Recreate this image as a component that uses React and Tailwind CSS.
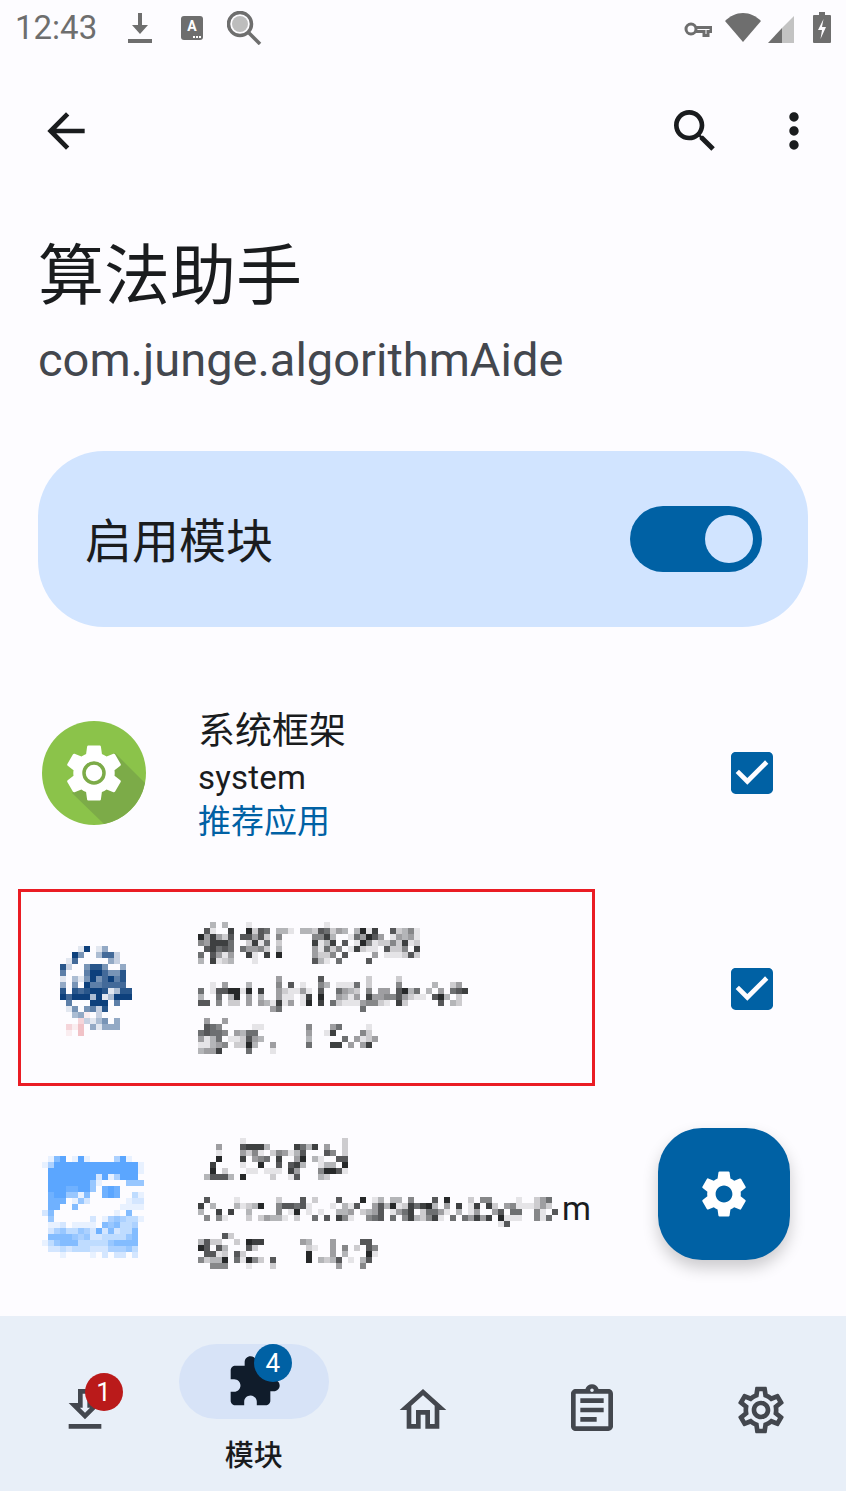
import React from 'react';

const ICONS = {
  back: 'M20 11H7.83l5.59-5.59L12 4l-8 8 8 8 1.41-1.41L7.83 13H20v-2z',
  search: 'M15.5 14h-.79l-.28-.27C15.41 12.59 16 11.11 16 9.5 16 5.91 13.09 3 9.5 3S3 5.91 3 9.5 5.91 16 9.5 16c1.61 0 3.09-.59 4.23-1.57l.27.28v.79l5 4.99L20.49 19l-4.99-5zm-6 0C7.01 14 5 11.99 5 9.5S7.01 5 9.5 5 14 7.01 14 9.5 11.99 14 9.5 14z',
  more: 'M12 8c1.1 0 2-.9 2-2s-.9-2-2-2-2 .9-2 2 .9 2 2 2zm0 2c-1.1 0-2 .9-2 2s.9 2 2 2 2-.9 2-2-.9-2-2-2zm0 6c-1.1 0-2 .9-2 2s.9 2 2 2 2-.9 2-2-.9-2-2-2z',
  gear: 'M19.14 12.94c.04-.3.06-.61.06-.94 0-.32-.02-.64-.07-.94l2.03-1.58c.18-.14.23-.41.12-.61l-1.92-3.32c-.12-.22-.37-.29-.59-.22l-2.39.96c-.5-.38-1.03-.7-1.62-.94l-.36-2.54c-.04-.24-.24-.41-.48-.41h-3.84c-.24 0-.43.17-.47.41l-.36 2.54c-.59.24-1.13.57-1.62.94l-2.39-.96c-.22-.08-.47 0-.59.22L2.74 8.87c-.12.21-.08.47.12.61l2.03 1.58c-.05.3-.09.63-.09.94s.02.64.07.94l-2.03 1.58c-.18.14-.23.41-.12.61l1.92 3.32c.12.22.37.29.59.22l2.39-.96c.5.38 1.03.7 1.62.94l.36 2.54c.05.24.24.41.48.41h3.84c.24 0 .44-.17.47-.41l.36-2.54c.59-.24 1.13-.56 1.62-.94l2.39.96c.22.08.47 0 .59-.22l1.92-3.32c.12-.22.07-.47-.12-.61l-2.01-1.58zM12 15.6c-1.98 0-3.6-1.62-3.6-3.6s1.62-3.6 3.6-3.6 3.6 1.62 3.6 3.6-1.62 3.6-3.6 3.6z',
  gearOutline: 'M19.43 12.98c.04-.32.07-.64.07-.98 0-.34-.03-.66-.07-.98l2.11-1.65c.19-.15.24-.42.12-.64l-2-3.46c-.09-.16-.26-.25-.44-.25-.06 0-.12.01-.17.03l-2.49 1c-.52-.4-1.08-.73-1.69-.98l-.38-2.65C14.46 2.18 14.25 2 14 2h-4c-.25 0-.46.18-.49.42l-.38 2.65c-.61.25-1.17.59-1.69.98l-2.49-1c-.06-.02-.12-.03-.18-.03-.17 0-.34.09-.43.25l-2 3.46c-.13.22-.07.49.12.64l2.11 1.65c-.04.32-.07.65-.07.98 0 .33.03.66.07.98l-2.11 1.65c-.19.15-.24.42-.12.64l2 3.46c.09.16.26.25.44.25.06 0 .12-.01.17-.03l2.49-1c.52.4 1.08.73 1.69.98l.38 2.65c.03.24.24.42.49.42h4c.25 0 .46-.18.49-.42l.38-2.65c.61-.25 1.17-.59 1.69-.98l2.49 1c.06.02.12.03.18.03.17 0 .34-.09.43-.25l2-3.46c.12-.22.07-.49-.12-.64l-2.11-1.65zm-1.98-1.71c.04.31.05.52.05.73 0 .21-.02.43-.05.73l-.14 1.13.89.7 1.08.84-.7 1.21-1.27-.51-1.04-.42-.9.68c-.43.32-.84.56-1.25.73l-1.06.43-.16 1.13-.2 1.35h-1.4l-.19-1.35-.16-1.13-1.06-.43c-.43-.18-.83-.41-1.23-.71l-.91-.7-1.06.43-1.27.51-.7-1.21 1.08-.84.89-.7-.14-1.13c-.03-.31-.05-.54-.05-.74s.02-.43.05-.73l.14-1.13-.89-.7-1.08-.84.7-1.21 1.27.51 1.04.42.9-.68c.43-.32.84-.56 1.25-.73l1.06-.43.16-1.13.2-1.35h1.39l.19 1.35.16 1.13 1.06.43c.43.18.83.41 1.23.71l.91.7 1.06-.43 1.27-.51.7 1.21-1.07.85-.89.7.14 1.13zM12 8c-2.21 0-4 1.79-4 4s1.79 4 4 4 4-1.79 4-4-1.79-4-4-4zm0 6c-1.1 0-2-.9-2-2s.9-2 2-2 2 .9 2 2-.9 2-2 2z',
  home: 'M12 5.69l5 4.5V18h-2v-6H9v6H7v-7.81l5-4.5M12 3L2 12h3v8h6v-6h2v6h6v-8h3L12 3z',
  assignment: 'M7 15h7v2H7zm0-4h10v2H7zm0-4h10v2H7zm12-4h-4.18C14.4 1.84 13.3 1 12 1c-1.3 0-2.4.84-2.82 2H5c-.14 0-.27.01-.4.04-.39.08-.74.28-1.01.55-.18.18-.33.4-.43.64-.1.23-.16.49-.16.77v14c0 .27.06.54.16.78s.25.45.43.64c.27.27.62.47 1.01.55.13.02.26.03.4.03h14c1.1 0 2-.9 2-2V5c0-1.1-.9-2-2-2zm-7-.25c.41 0 .75.34.75.75s-.34.75-.75.75-.75-.34-.75-.75.34-.75.75-.75zM19 19H5V5h14v14z',
  extension: 'M20.5 11H19V7c0-1.1-.9-2-2-2h-4V3.5C13 2.12 11.88 1 10.5 1S8 2.12 8 3.5V5H4c-1.1 0-1.99.9-1.99 2v3.8H3.5c1.49 0 2.7 1.21 2.7 2.7s-1.21 2.7-2.7 2.7H2V20c0 1.1.9 2 2 2h3.8v-1.5c0-1.49 1.21-2.7 2.7-2.7 1.49 0 2.7 1.21 2.7 2.7V22H17c1.1 0 2-.9 2-2v-4h1.5c1.38 0 2.5-1.12 2.5-2.5S21.88 11 20.5 11z',
  download: 'M19 9h-4V3H9v6H5l7 7 7-7zm-8 2V5h2v6h1.17L12 13.17 9.83 11H11zm-6 7h14v2H5z',
  checkBox: 'M19 3H5c-1.11 0-2 .9-2 2v14c0 1.1.89 2 2 2h14c1.11 0 2-.9 2-2V5c0-1.1-.89-2-2-2zm-9 14l-5-5 1.41-1.41L10 14.17l7.59-7.59L19 8l-9 9z',
};

function Icon({ d, className }) {
  return (
    <svg viewBox="0 0 24 24" className={className} fill="currentColor">
      <path d={d} />
    </svg>
  );
}

// pixelated areas of the screenshot, one string per row of 6px blocks: "column:level"
// level 1-9 is how strong the colour is, a-c are the pink blocks
function Mosaic({ rows, cols, color = '26,28,30', className }) {
  return (
    <svg viewBox={`0 0 ${cols * 6} ${rows.length * 6}`} width={cols * 6} height={rows.length * 6} className={className} shapeRendering="crispEdges">
      {rows.map((row, y) =>
        row.split(' ').filter(Boolean).map((cell) => {
          const [x, v] = cell.split(':');
          const pink = { a: 0.2, b: 0.3, c: 0.08 }[v];
          const fill = pink ? `rgba(215,60,70,${pink})` : `rgba(${color},${Number(v) / 9.5})`;
          return <rect key={x} x={x * 6} y={y * 6} width="6" height="6" fill={fill} />;
        })
      )}
    </svg>
  );
}

const TITLE_2 = [
  '2:3 4:3 8:1 21:1',
  '1:7 2:1 5:8 8:9 9:2 10:7 11:6 13:3 14:3 15:1 17:3 18:3 19:2 20:7 21:6 22:2 23:4 24:3 26:3 27:9 28:1 29:8 32:7 33:2 34:3 35:5 36:1',
  '0:9 1:4 2:8 3:4 4:2 5:7 7:7 8:7 9:4 10:7 11:2 13:5 19:5 20:5 21:8 22:3 25:1 26:6 27:4 28:9 29:7 30:4 32:1 33:4 34:3 35:4 36:1',
  '0:5 1:4 2:8 3:8 4:8 5:6 8:2 9:8 10:1 11:6 13:2 19:8 20:1 21:3 22:8 24:7 26:1 27:9 28:5 29:1 30:2 31:2 32:5 33:2 34:8 35:1 36:2',
  '1:7 2:8 3:6 4:7 5:6 7:6 8:4 9:4 10:5 11:2 13:3 19:4 20:1 21:6 22:2 23:5 25:1 26:8 27:2 28:1 29:1 31:7 32:2 33:2 34:5 36:8',
  '0:6 2:7 3:4 4:1 5:4 8:8 9:1 11:8 13:9 19:4 20:2 21:2 22:5 24:7 29:4 31:1 32:1 33:1 34:2 35:7 36:2',
  '0:3 2:8 3:1 4:2 5:3 9:1 19:7 20:3 21:1 23:6 28:7',
];
const SUB_2 = [
  '13:4 20:7 28:2 33:2',
  '2:1 4:4 8:3 13:5 15:7 17:1 20:5 21:3 23:1 24:1 25:1 26:6 28:2 33:5 39:3 42:2 43:4',
  '0:6 2:1 3:7 4:7 5:9 6:9 7:1 8:9 10:8 13:4 14:2 15:1 16:1 17:4 18:1 20:7 23:6 24:4 25:3 26:2 28:5 30:4 31:4 33:7 34:9 35:3 36:6 38:3 40:4 42:6 43:7 44:8',
  '0:3 3:6 5:3 6:9 8:4 10:3 13:4 14:1 15:1 17:1 18:8 20:9 23:4 24:3 25:1 26:4 28:8 29:4 30:4 31:5 32:5 33:7 34:4 35:2 36:1 37:1 39:7 40:9 41:3 43:2',
  '0:7 1:7 3:5 5:2 6:2 8:4 10:4 11:3 12:1 13:8 14:1 15:4 17:1 18:9 20:8 22:6 23:2 24:1 25:1 26:1 27:4 28:5 29:5 30:2 31:1 33:8 34:2 40:7 42:3 43:2',
  '12:4 13:6 27:6',
];
const META_2 = [
  '1:4 4:4',
  '1:7 2:6 3:5 9:1 10:1 18:5 22:4 23:6 28:1',
  '0:6 1:7 2:6 3:6 4:5 6:4 7:3 8:6 9:6 18:4 21:1 22:8 27:5 28:2',
  '0:4 1:1 2:3 3:6 5:1 6:1 7:2 8:7 9:4 10:3 18:3 24:6 26:4 27:1 28:2 29:4',
  '0:1 1:1 2:3 3:4 4:5 6:2 7:2 8:9 9:3 12:4 18:6 22:8 23:8 25:4 27:4 28:8',
  '0:3 1:4 2:4 3:8 8:6 12:1',
];
const ICON_2 = [
  '6:1 7:9 9:1 10:4',
  '5:9 6:5 9:3 10:7 11:7 12:2',
  '4:1 5:7 11:4 12:2',
  '3:8 4:2 7:5 8:8 9:8 10:5 13:4',
  '3:6 7:6 8:9 9:9 10:7 11:5 12:5 13:8',
  '3:1 5:3 6:1 7:5 8:9 9:5 10:7 11:9 12:6 13:8',
  '3:4 5:5 7:9 8:6 9:6 10:7 11:7 12:7 13:7',
  '3:8 5:8 6:7 7:8 8:9 9:9 10:8 11:1 12:3 13:8 14:8',
  '3:9 4:7 5:9 6:9 7:9 8:3 9:9 10:1 11:3 12:9 13:9 14:9',
  '4:6 8:9 9:9 10:9 12:6',
  '4:1 5:5 7:5 8:6 9:2 10:8',
  '5:3 6:4 7:c 9:2',
  '6:a 7:2 8:1 9:3 10:5 12:4',
  '4:a 5:c 6:b 8:4 9:1 10:4 11:4 12:4',
  '4:c 6:b',
];

const TITLE_3 = [
  '7:1 24:2',
  '3:4 7:7 8:8 9:8 10:8 11:3 16:8 17:6 18:3 19:8 21:4 24:2',
  '3:1 7:4 8:2 9:5 10:1 12:2 13:5 14:4 15:1 16:3 17:7 21:7 22:5 24:2',
  '3:9 7:8 9:4 10:5 11:6 13:8 16:4 17:9 19:3 20:1 23:7 24:7',
  '2:8 7:1 10:9 13:7 15:7 16:8 17:3 20:1 21:3 22:3 24:9',
  '2:9 4:2 8:1 9:1 11:1 12:1 13:1 15:8 16:4 20:5 21:9 22:9 23:7 24:1',
  '1:3 2:7 3:7 4:7 5:3 7:9 12:2 15:1 16:7 20:3 21:2',
];
const SUB_3 = [
  '1:7 6:1 13:2 17:7 19:2 23:7 27:9 29:1 30:3 32:3 33:3 35:5 39:7 41:9 45:2 47:5 48:5 53:1 56:2 57:4 58:6',
  '0:8 2:3 6:3 7:1 8:2 9:3 10:9 13:5 14:7 15:7 16:6 17:7 18:1 22:1 24:3 25:1 26:7 29:4 30:7 31:3 32:9 33:1 34:2 35:8 36:6 37:8 38:9 39:3 41:4 43:8 45:1 46:8 48:8 49:2 51:4 52:5 53:1 54:1 55:1 56:2 57:4 58:2',
  '0:3 3:8 5:8 8:3 13:5 15:1 16:9 18:1 20:1 23:3 24:3 25:4 27:2 28:3 29:4 30:7 32:1 33:4 34:6 35:8 37:2 38:6 39:6 40:4 41:1 43:3 45:1 46:4 49:4 50:7 52:6 53:6 56:5 57:1 59:7',
  '1:5 3:5 4:1 8:2 10:2 11:4 12:3 13:3 14:1 16:2 19:6 21:7 23:8 24:5 25:1 28:5 29:6 30:7 32:6 34:5 35:8 36:3 37:2 38:5 39:8 40:1 42:6 44:6 45:4 46:8 47:4 48:8 50:9 51:1 52:1 53:1 56:5 57:1 58:6',
  '50:1 51:7',
];
const META_3 = [
  '4:7 5:2',
  '0:3 1:7 2:2 3:2 6:2 8:9 9:8 10:8 17:4 18:3 22:4 27:7 28:7',
  '0:9 1:7 3:7 4:3 8:7 9:2 18:2 19:1 22:4 24:5 26:2 28:7 29:5',
  '1:7 2:7 3:1 4:2 6:7 7:2 18:9 22:4 24:3 28:9 29:1',
  '0:5 1:2 2:3 3:3 4:9 6:6 7:1 8:9 9:5 10:2 12:7 18:9 20:3 21:2 22:3 23:7 25:1 27:3 28:7',
  '2:5 3:5 4:5 8:1 12:2 23:4 27:5',
];
const ICON_3 = [
  '1:1 2:6 3:8 5:1 6:8 7:1 12:4 13:8 14:1',
  '0:1 1:4 2:8 3:8 4:8 5:8 6:8 7:8 8:8 9:8 10:8 11:8 12:8 13:8 14:8 15:8 16:1',
  '1:8 2:8 3:8 4:8 5:8 6:8 7:8 8:8 9:8 10:8 11:8 12:8 13:8 14:8 15:8 16:1',
  '1:8 2:8 3:8 4:8 5:8 6:8 7:8 8:8 9:2 10:8 11:1 12:4 13:8 14:8 15:8',
  '1:8 2:8 3:8 4:8 5:8 6:8 7:8 8:5 9:1 14:5 15:5 16:5',
  '1:8 2:8 3:8 4:7 5:7 6:8 7:8 8:5 10:7 11:8 12:7',
  '1:7 2:8 3:8 4:5 5:5 6:1 7:6 10:7 11:8 12:7 15:3 16:1',
  '1:7 2:7 3:7 5:1 6:5 7:2 14:1 15:2 16:2',
  '1:7 2:7 5:6 13:1 14:1 15:1 16:1',
  '0:2 1:6 12:1 14:6',
  '1:5 8:2 10:1 11:4 12:5 13:4 14:3 15:3 16:1',
  '1:1 2:1 3:2 5:1 6:1 7:1 8:1 10:6 11:5 12:6 13:3 14:3 15:4',
  '1:2 2:4 3:5 4:3 5:3 6:5 7:4 8:2 9:7 10:2 11:6 12:2 13:3 14:3 15:6',
  '1:6 2:6 3:6 4:6 5:5 6:4 7:5 8:2 9:2 10:3 11:3 12:3 13:3 14:5 15:6',
  '0:1 1:3 2:5 3:6 4:6 5:6 6:3 7:3 8:3 9:3 10:3 11:5 12:6 13:6 14:6 15:6',
  '1:2 2:2 3:3 4:2 5:3 6:3 7:3 8:2 9:2 10:2 11:4 12:4 13:4 14:5 15:3',
  '3:1 8:1 10:2 12:2 13:2 15:2',
];

const Row = ({ children, boxed }) => (
  <div className="relative h-[216px] shrink-0 flex items-start pl-[42px]">
    {boxed && <div className="absolute left-[18px] top-[8px] w-[577px] h-[197px] border-[3px] border-[#ea1c24]" />}
    {children}
  </div>
);

const Check = () => (
  <Icon d={ICONS.checkBox} className="absolute left-[724px] top-1/2 -translate-y-1/2 w-[56px] h-[56px] text-[#0061a4]" />
);

export default function App() {
  return (
    <div className="relative w-[846px] h-[1491px] overflow-hidden flex flex-col bg-[#fdfcff] text-[#1a1c1e] font-['Roboto','Noto_Sans_CJK_SC',sans-serif]">
      {/* status bar */}
      <div className="h-[62px] shrink-0 flex items-start text-[#6e6e6e]">
        <span className="ml-[15px] mt-[9px] text-[33px] leading-[38px] w-[82px] whitespace-nowrap">12:43</span>
        <svg viewBox="0 0 24 30" className="ml-[31px] mt-[13px] w-[24px] h-[30px]" fill="currentColor">
          <path d="M10 0h4v12h6l-8 9-8-9h6zM0 26h24v4H0z" />
        </svg>
        <div className="ml-[29px] mt-[16px] w-[22px] h-[24px] rounded-[3px] bg-current relative flex justify-center">
          <span className="text-white text-[14px] leading-[20px] font-bold">A</span>
          <span className="absolute right-[2px] bottom-[2px] w-[8px] h-[2px] border-b-2 border-dotted border-white" />
        </div>
        <svg viewBox="0 0 35 34" className="ml-[24px] mt-[11px] w-[35px] h-[34px]" fill="none" stroke="currentColor">
          <circle cx="13" cy="13" r="11.5" strokeWidth="3.5" />
          <circle cx="13" cy="13" r="8" fill="#bdbdbd" stroke="none" />
          <path d="M22 22l11 11" strokeWidth="3.5" />
        </svg>
        <svg viewBox="0 0 28 16" className="ml-[422px] mt-[21px] w-[28px] h-[16px]" fill="none" stroke="currentColor" strokeWidth="3">
          <circle cx="7" cy="8" r="5" />
          <path d="M12 6.5h15v4h-3v4h-4v-4h-8" />
        </svg>
        <svg viewBox="0 0 36 29" className="ml-[13px] mt-[13px] w-[36px] h-[29px]" fill="currentColor">
          <path d="M18 29L0 8C5 3 11 0 18 0s13 3 18 8z" />
        </svg>
        <svg viewBox="0 0 26 27" className="ml-[7px] mt-[16px] w-[26px] h-[27px]">
          <path d="M26 0v27H14V12z" fill="#c3c3c3" />
          <path d="M14 12v15H0z" fill="currentColor" />
        </svg>
        <svg viewBox="0 0 18 31" className="ml-[19px] mt-[12px] w-[18px] h-[31px]">
          <path d="M6 0h6v3h5a1 1 0 011 1v26a1 1 0 01-1 1H1a1 1 0 01-1-1V4a1 1 0 011-1h5z" fill="currentColor" />
          <path d="M10.5 7L5 18h4l-1.5 9L13 15H9z" fill="#fdfcff" />
        </svg>
      </div>

      {/* toolbar */}
      <div className="h-[138px] shrink-0 flex items-center text-[#1a1c1e]">
        <Icon d={ICONS.back} className="ml-[38px] w-[56px] h-[56px]" />
        <Icon d={ICONS.search} className="ml-auto w-[56px] h-[56px]" />
        <Icon d={ICONS.more} className="ml-[43px] mr-[24px] w-[56px] h-[56px]" />
      </div>

      <h1 className="ml-[38px] mt-[40px] text-[66px] leading-[74px] font-normal">算法助手</h1>
      <p className="ml-[38px] mt-[20px] text-[47px] leading-[52px] text-[#43474e]">com.junge.algorithmAide</p>

      {/* master switch */}
      <div className="mx-[38px] mt-[65px] h-[176px] shrink-0 rounded-[66px] bg-[#d1e4ff] flex items-center justify-between pl-[47px] pr-[46px]">
        <span className="pt-[5px] text-[47px] leading-[56px]">启用模块</span>
        <div className="relative w-[132px] h-[66px] rounded-full bg-[#0061a4]">
          <div className="absolute left-[75px] top-[9px] w-[48px] h-[48px] rounded-full bg-[#d1e4ff]" />
        </div>
      </div>

      {/* app list */}
      <div className="mt-[38px] flex-1 min-h-0 flex flex-col">
        <Row>
          <div className="w-[156px] shrink-0 pt-[56px]">
            <svg viewBox="0 0 104 104" className="w-[104px] h-[104px]">
              <circle cx="52" cy="52" r="52" fill="#8bc34a" />
              <path d="M30 72L62 103A52 52 0 0 0 103 62L73 32z" fill="#7cab48" />
              <g transform="translate(17.5 17.5) scale(2.875)">
                <path d={ICONS.gear} fill="#fff" />
              </g>
              <circle cx="52" cy="52" r="11" fill="#fff" />
              <circle cx="52" cy="52" r="10" fill="none" stroke="#7cab48" strokeWidth="3.5" />
            </svg>
          </div>
          <div className="pt-[43px] flex flex-col">
            <span className="text-[37px] leading-[48px]">系统框架</span>
            <span className="text-[33px] leading-[44px] tracking-[0.2px]">system</span>
            <span className="text-[33px] leading-[44px] text-[#0061a4]">推荐应用</span>
          </div>
          <Check />
        </Row>
        <Row boxed>
          <div className="w-[156px] shrink-0 pt-[65px]">
            <Mosaic rows={ICON_2} cols={15} color="0,54,117" />
          </div>
          <div className="pt-[41px] flex flex-col">
            <Mosaic rows={TITLE_2} cols={37} />
            <Mosaic rows={SUB_2} cols={46} className="mt-[12px]" />
            <Mosaic rows={META_2} cols={30} className="mt-[6px]" />
          </div>
          <Check />
        </Row>
        <Row>
          <div className="w-[156px] shrink-0 pt-[59px]">
            <Mosaic rows={ICON_3} cols={17} color="60,150,255" />
          </div>
          <div className="pt-[41px] flex flex-col">
            <Mosaic rows={TITLE_3} cols={25} />
            <div className="mt-[17px] flex items-start">
              <Mosaic rows={SUB_3} cols={60} />
              <span className="ml-[4px] -mt-[6px] text-[33px] leading-[36px]">m</span>
            </div>
            <Mosaic rows={META_3} cols={30} className="mt-[6px]" />
          </div>
        </Row>
      </div>

      {/* fab */}
      <div className="absolute left-[658px] top-[1128px] w-[132px] h-[132px] rounded-[44px] bg-[#0061a4] flex items-center justify-center text-white shadow-[0_8px_16px_rgba(0,0,0,0.2)]">
        <Icon d={ICONS.gear} className="w-[56px] h-[56px]" />
      </div>

      {/* bottom nav */}
      <div className="h-[175px] shrink-0 grid grid-cols-5 bg-[#e8eff8] text-[#43474e]">
        <div className="flex justify-center pt-[66px]">
          <div className="relative w-[56px] h-[56px]">
            <Icon d={ICONS.download} className="w-[56px] h-[56px]" />
            <span className="absolute left-[28px] -top-[9px] w-[38px] h-[38px] rounded-full bg-[#ba1a1a] text-white text-[26px] leading-[38px] text-center">1</span>
          </div>
        </div>
        <div className="flex flex-col items-center pt-[28px]">
          <div className="relative w-[150px] h-[75px] rounded-full bg-[#d7e3f7] flex items-center justify-center">
            <Icon d={ICONS.extension} className="w-[56px] h-[56px] text-[#101c2b]" />
            <span className="absolute left-[75px] top-0 w-[38px] h-[38px] rounded-full bg-[#0061a4] text-white text-[26px] leading-[38px] text-center">4</span>
          </div>
          <span className="mt-[17px] text-[29px] leading-[40px] font-medium text-[#1a1c1e]">模块</span>
        </div>
        <div className="flex justify-center pt-[66px]">
          <Icon d={ICONS.home} className="w-[56px] h-[56px]" />
        </div>
        <div className="flex justify-center pt-[66px]">
          <Icon d={ICONS.assignment} className="w-[56px] h-[56px]" />
        </div>
        <div className="flex justify-center pt-[66px]">
          <Icon d={ICONS.gearOutline} className="w-[56px] h-[56px]" />
        </div>
      </div>
    </div>
  );
}
